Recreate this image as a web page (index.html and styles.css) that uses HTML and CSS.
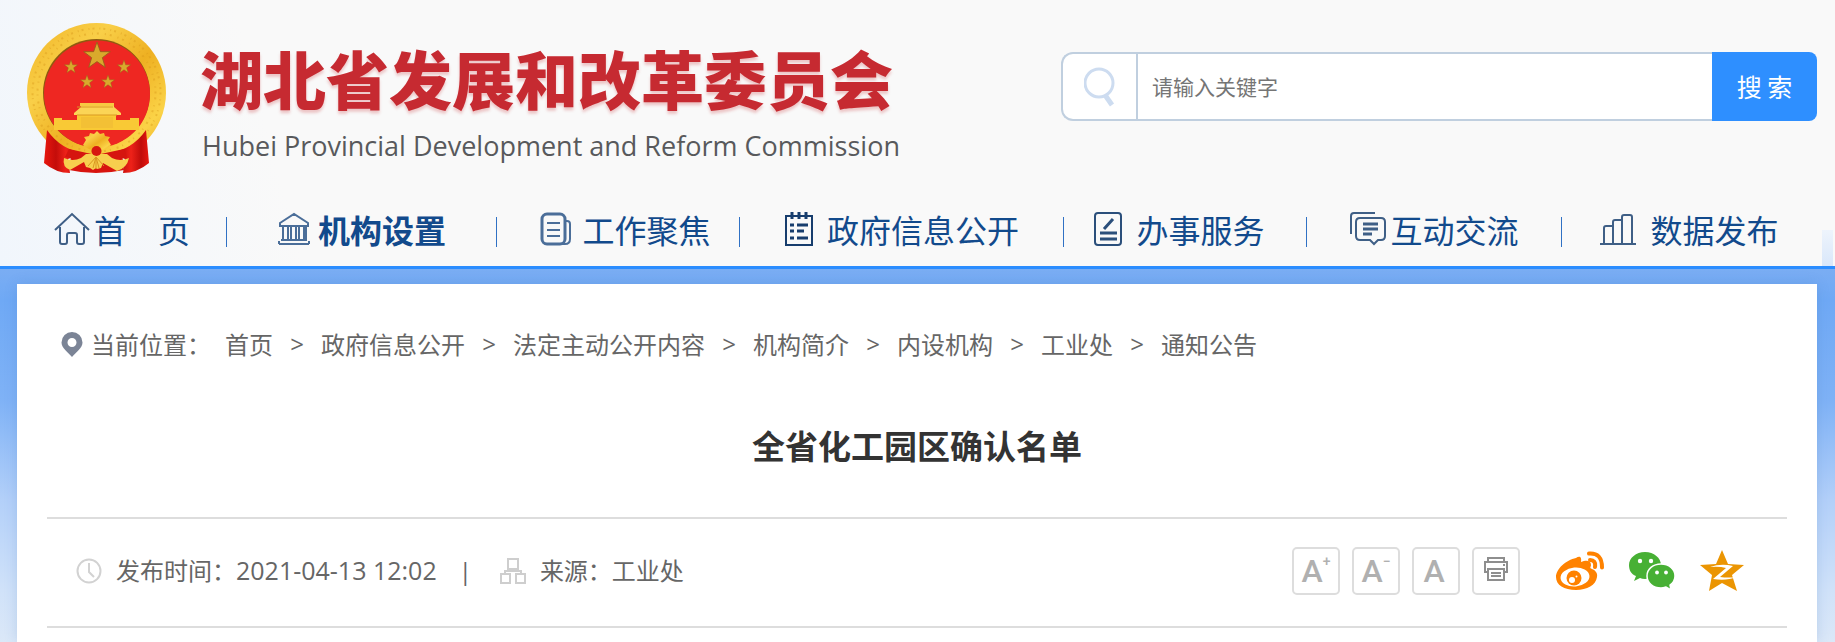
FILE: index.html
```html
<!DOCTYPE html>
<html lang="zh-CN">
<head>
  <meta charset="UTF-8">
  <meta name="viewport" content="width=device-width, initial-scale=1.0">
  <title>全省化工园区确认名单 - 湖北省发展和改革委员会</title>
  <link rel="stylesheet" href="styles.css">
</head>
<body>

  <!-- Header Section -->
  <header class="header">
    <div class="header-top">
      <a href="#" class="logo">
        <svg class="emblem" viewBox="0 0 140 150" aria-hidden="true">
          <defs>
            <linearGradient id="gold" x1="0" y1="0" x2="1" y2="1">
              <stop offset="0" stop-color="#f0b426"/>
              <stop offset=".3" stop-color="#f9cf48"/>
              <stop offset=".55" stop-color="#eeb022"/>
              <stop offset=".8" stop-color="#fbd347"/>
              <stop offset="1" stop-color="#e9a51c"/>
            </linearGradient>
            <linearGradient id="drape" x1="0" y1="0" x2="1" y2="0">
              <stop offset="0" stop-color="#e8170f"/>
              <stop offset=".3" stop-color="#c40d0a"/>
              <stop offset=".55" stop-color="#ee2219"/>
              <stop offset=".8" stop-color="#c00c0a"/>
              <stop offset="1" stop-color="#e8170f"/>
            </linearGradient>
            <path id="star" d="M0-10 2.4-3.1 9.5-3.1 3.8 1.2 5.9 8.1 0 4-5.9 8.1-3.8 1.2-9.5-3.1-2.4-3.1Z"/>
          </defs>
          <path fill="#d8140f" d="M46 120h48l3 27q-14 3-28 3t-27-3Z"/>
          <circle cx="69.500" cy="69.500" r="69.500" fill="url(#gold)"/>
          <circle cx="69.500" cy="69.500" r="64" fill="none" stroke="#d8951a" stroke-width="2" stroke-dasharray="2 5 1 3" opacity=".4"/>
          <circle cx="69.500" cy="69.500" r="59" fill="none" stroke="#d8951a" stroke-width="2" stroke-dasharray="1 4 2 6" opacity=".4"/>
          <ellipse cx="69.500" cy="70" rx="53.500" ry="54" fill="#8e5b10"/>
          <ellipse cx="70" cy="71" rx="53" ry="53.500" fill="#ee2722"/>
          <!-- stars -->
          <g fill="#d9a92c" stroke="#94601a" stroke-width=".6">
            <use href="#star" transform="translate(70 33) scale(1.4)"/>
            <use href="#star" transform="translate(44 44) scale(.7)"/>
            <use href="#star" transform="translate(97 44) scale(.7)"/>
            <use href="#star" transform="translate(60 59) scale(.7)"/>
            <use href="#star" transform="translate(81 59) scale(.7)"/>
          </g>
          <!-- gate -->
          <path fill="#f9c935" d="M27 95h8v2h15v-5h39v5h14v-2h9v12H27Z"/>
          <path fill="#fbd556" d="M53 80h34v4l7 6v2H47v-2l7-6Z"/>
          <path fill="#f7c942" d="M53 80h34v3H53Z"/>
          <path stroke="#d99a22" d="M50 92h40M50 84h36" fill="none"/>
          <path fill="#f3c035" d="M54 94h32v11H54Z"/>
          <!-- lower ring and drapes -->
          <path fill="url(#drape)" d="M20 107q14 20 37 23l-16 6 2 14q-14 0-26-10Z"/>
          <path fill="url(#drape)" d="M119 107q-14 20-37 23l16 6-2 14q14 0 26-10Z"/>
          <path fill="#d6150f" d="M42 126 69 132l28-6 3 8-31 7-31-7Z"/>
          <path fill="url(#gold)" d="m56 122 3-5-2-3 5-1 1-3 4 1 3-3 3 3 4-1 1 3 5 1-2 3 3 5q-7 6-14 6t-14-6Z"/>
          <path fill="#f7cf4e" d="M37 135q9 4 17 0l5-4h21l5 4q8 4 17 0-2 10-12 13l-14-8-2 5-4 1-1-1-3 2-3-2-4-1-2-5-14 8q-8-3-6-12Z"/>
          <path stroke="#d99620" fill="none" d="m69 134-8 9M69 134v12M69 134l8 9M69 134l-3 11M69 134l3 11"/>
          <circle cx="69.500" cy="128" r="5" fill="#d71710"/>
        </svg>
        <span class="logo-text">
          <span class="logo-cn">湖北省发展和改革委员会</span>
          <span class="logo-en">Hubei Provincial Development and Reform Commission</span>
        </span>
      </a>

      <form class="search" action="#">
        <label class="search-icon" for="keyword" aria-label="关键字">
          <svg width="32" height="40" viewBox="0 0 32 40" fill="none" stroke="#cddcf0">
            <circle cx="15" cy="16" r="14" stroke-width="3"/>
            <path d="m21 28 7 10" stroke-width="5"/>
          </svg>
        </label>
        <input class="search-input" id="keyword" type="text" placeholder="请输入关键字">
        <button class="search-button" type="submit">搜 索</button>
      </form>
    </div>

    <!-- Navigation Section -->
    <nav class="nav">
      <a href="#" class="nav-item nav-home">
        <svg width="36" height="34" viewBox="0 0 36 34" fill="none" stroke="#3f5f86" stroke-width="2">
          <path d="M1 18 18 2l17 16M6 15v15q0 2 2 2h3q2 0 2-2v-7q0-2 2-2h6q2 0 2 2v7q0 2 2 2h3q2 0 2-2V15"/>
        </svg>
        首&emsp;页
      </a>
      <a href="#" class="nav-item nav-org active">
        <svg width="32" height="34" viewBox="0 0 32 34" fill="none" stroke="#4b6e99" stroke-width="2">
          <path d="M2 11 16 2l14 9v3H2ZM5 14v14M10 14v14M13 14v14M18 14v14M21 14v14M26 14v14M28 14v14M3 28h26M1 32h30M1 29v3M31 29v3"/>
        </svg>
        机构设置
      </a>
      <a href="#" class="nav-item nav-focus">
        <svg width="32" height="34" viewBox="0 0 32 34" fill="none" stroke="#4b6e99" stroke-width="3">
          <rect x="2" y="2" width="23" height="30" rx="5"/>
          <path d="M25 9h2q3 0 3 3v15q0 5-5 5h-4M7 11h13M7 18h13M7 24h13" stroke-width="2"/>
        </svg>
        工作聚焦
      </a>
      <a href="#" class="nav-item nav-gov">
        <svg width="28" height="34" viewBox="0 0 28 34" fill="none" stroke="#173d6d" stroke-width="2">
          <path d="M1 4h26v29H1Z"/>
          <path d="M7 0v7M14 0v7M21 0v7M5 13h4M5 19h4M5 26h4M12 13h11M12 19h7M12 26h11" stroke-width="3"/>
        </svg>
        政府信息公开
      </a>
      <a href="#" class="nav-item nav-service">
        <svg width="28" height="34" viewBox="0 0 28 34" fill="none" stroke="#2b4f7b" stroke-width="2">
          <rect x="1" y="1" width="26" height="32" rx="3"/>
          <path d="m10 17 9-10M6 21h17M6 27h17" stroke-width="3"/>
        </svg>
        办事服务
      </a>
      <a href="#" class="nav-item nav-talk">
        <svg width="36" height="34" viewBox="0 0 36 34" fill="none" stroke="#3f5f86" stroke-width="2">
          <path d="M1 22V4q0-3 3-3h21M10 6h21q4 0 4 4v14q0 4-4 4h-3l-4 4-4-4H10q-4 0-4-4V10q0-4 4-4Z"/>
          <path d="M13 12h15M13 17h15M13 22h9" stroke-width="3"/>
        </svg>
        互动交流
      </a>
      <a href="#" class="nav-item nav-data">
        <svg width="36" height="34" viewBox="0 0 36 34" fill="none" stroke="#3f5f86" stroke-width="2">
          <path d="M0 32h36M4 32V16q0-2 2-2h7M13 32V10q0-2 2-2h7M22 32V5q0-2 2-2h6q2 0 2 2v27"/>
        </svg>
        数据发布
      </a>
    </nav>
  </header>

  <!-- Main Content Section -->
  <main class="content">
    <div class="breadcrumb">
      <svg class="pin" width="22" height="25" viewBox="0 0 22 25">
        <path fill="#7b8496" fill-rule="evenodd" d="M11 0a10.500 10.500 0 0 1 10.500 10.500C21.500 16 15 20 11 25 7 20 .5 16 .5 10.500A10.500 10.500 0 0 1 11 0Zm0 6a4.500 4.500 0 1 0 0 9 4.500 4.500 0 0 0 0-9Z"/>
      </svg>
      <span class="breadcrumb-label">当前位置：</span>
      <a href="#">首页</a><span class="arrow">&gt;</span>
      <a href="#">政府信息公开</a><span class="arrow">&gt;</span>
      <a href="#">法定主动公开内容</a><span class="arrow">&gt;</span>
      <a href="#">机构简介</a><span class="arrow">&gt;</span>
      <a href="#">内设机构</a><span class="arrow">&gt;</span>
      <a href="#">工业处</a><span class="arrow">&gt;</span>
      <a href="#">通知公告</a>
    </div>

    <h1 class="title">全省化工园区确认名单</h1>

    <div class="info">
      <div class="info-text">
        <svg width="26" height="26" viewBox="0 0 26 26" fill="none" stroke="#d2d2d2" stroke-width="2">
          <circle cx="13" cy="13" r="11.500"/>
          <path d="M13 5v9l5 5"/>
        </svg>
        <span>发布时间：<time class="date">2021-04-13 12:02</time></span>
        <span class="divider">|</span>
        <svg width="26" height="26" viewBox="0 0 26 26" fill="none" stroke="#cecece" stroke-width="2">
          <path d="M8 1h10v10H8ZM1 16h9v9H1ZM16 16h9v9h-9ZM13 11v2M5 16v-3h16v3"/>
        </svg>
        <span>来源：工业处</span>
      </div>
      <div class="tools">
        <button class="tool" type="button" aria-label="放大字体">A<sup>+</sup></button>
        <button class="tool" type="button" aria-label="缩小字体">A<sup>−</sup></button>
        <button class="tool tool-plain" type="button" aria-label="默认字体">A</button>
        <button class="tool tool-print" type="button" aria-label="打印">
          <svg width="24" height="24" viewBox="0 0 24 24" fill="none" stroke="#8e8e8e" stroke-width="2">
            <path d="M4 5V1h16v4M4 15H1V5h22v10h-3M4 12h16v11H4ZM7 16h10M7 19h10M19 8h2"/>
          </svg>
        </button>
      </div>
      <div class="share">
        <a href="#" aria-label="微博">
          <svg width="48" height="40" viewBox="0 0 48 40">
            <path fill="#ff8200" d="M20 7c3-2 6-2 5 4 5-2 10-2 10 3 0 2-2 3 1 4 3 1 6 4 5 8-1 8-10 13-21 13C8 39 0 34 0 26 0 18 10 9 20 7Z"/>
            <ellipse cx="19" cy="26" rx="14.500" ry="9.500" fill="#fff" transform="rotate(-5 19 26)"/>
            <circle cx="18" cy="27" r="7.500" fill="#ff8200"/>
            <circle cx="16" cy="29" r="3" fill="#fff"/>
            <circle cx="20.500" cy="25.500" r="1" fill="#fff"/>
            <path fill="none" stroke="#ff8200" stroke-linecap="round" stroke-width="4" d="M33 2.500q13-1 13 14M34 9q6 0 5 7"/>
          </svg>
        </a>
        <a href="#" aria-label="微信">
          <svg width="46" height="40" viewBox="0 0 46 40">
            <path fill="#47b034" d="M16 1c9 0 16 6 16 13S25 28 16 28q-3 0-5-1l-6 3 2-5C2 23 0 19 0 14 0 7 7 1 16 1Z"/>
            <path fill="#47b034" stroke="#fff" stroke-width="1.500" d="M32 13c8 0 14 5 14 12 0 4-2 7-5 9l1 5-5-3q-3 1-5 1c-8 0-14-5-14-12s6-12 14-12Z"/>
            <g fill="#fff"><circle cx="11" cy="10" r="2.200"/><circle cx="22" cy="10" r="2.200"/><circle cx="28" cy="21.500" r="1.900"/><circle cx="37" cy="21.500" r="1.900"/></g>
          </svg>
        </a>
        <a href="#" aria-label="QQ空间">
          <svg width="44" height="42" viewBox="0 0 44 42">
            <path fill="#eb9502" d="m22 0 6 14 16 1-12 10 5 16-15-8-13 8 3-16L0 15l16-1Z"/>
            <path fill="#fff" d="M10 17q11-4 23-1L20 27q9 1 16 0-9 4-23 2L26 18q-7-2-16-1Z"/>
          </svg>
        </a>
      </div>
    </div>
  </main>

</body>
</html>
```
FILE: styles.css
```css
/* Global Styles */
* {
  box-sizing: border-box;
}

body {
  margin: 0;
  min-height: 100vh;
  font-family: "Noto Sans CJK SC", sans-serif;
  color: #666;
  background: linear-gradient(#7aadf3 270px, #6fa9f5 300px, #7fb2f6 400px, #b3d0f9 500px, #d0e2f9 590px, #dbe8f8 642px);
}

a {
  color: inherit;
  text-decoration: none;
}

svg {
  display: block;
  flex: none;
}

/* Header */
.header {
  background:
    linear-gradient(#eef4fc, #d9e7fa) right 2px bottom / 11px 36px no-repeat,
    linear-gradient(75deg, #f1f6fc, #f9f9f9 16%);
  border-bottom: 3px solid #2b8dff;
}

.header-top {
  display: flex;
  justify-content: space-between;
  align-items: flex-start;
  height: 196px;
  padding: 23px 18px 0 27px;
}

.logo {
  display: flex;
  gap: 33px;
}

.emblem {
  width: 140px;
  height: 150px;
}

.logo-text {
  display: flex;
  flex-direction: column;
  padding-top: 14px;
}

.logo-cn {
  font-size: 63px;
  font-weight: 900;
  line-height: 80px;
  color: #c62a31;
  text-shadow: 0 3px 3px rgba(198, 42, 49, 0.25);
}

.logo-en {
  padding-left: 2px;
  font-family: "Open Sans", sans-serif;
  font-size: 27px;
  line-height: 58px;
  color: #58595c;
}

.search {
  display: flex;
  width: 756px;
  height: 69px;
  margin-top: 29px;
}

.search-icon {
  display: flex;
  align-items: center;
  justify-content: center;
  width: 75px;
  background: #fff;
  border: 2px solid #c0cfdf;
  border-right: 0;
  border-radius: 12px 0 0 12px;
}

.search-input {
  flex: 1;
  min-width: 0;
  padding: 0 0 2px 14px;
  font-family: inherit;
  font-size: 21px;
  border: 2px solid #c0cfdf;
  border-right: 0;
  border-radius: 0;
  outline: 0;
}

.search-input::placeholder {
  color: #757575;
}

.search-button {
  width: 105px;
  padding: 0 0 2px;
  font-family: inherit;
  font-size: 25px;
  color: #fff;
  background: #2e8fff;
  border: 0;
  border-radius: 0 8px 8px 0;
}

/* Navigation */
.nav {
  display: flex;
  height: 70px;
  margin: 0 18px 0 17px;
}

.nav-item {
  display: flex;
  flex: 255 1 0;
  align-items: center;
  justify-content: center;
  gap: 10px;
  height: 70px;
  padding-bottom: 4px;
  font-size: 32px;
  line-height: 66px;
  white-space: nowrap;
  color: #124a8c;
  background: linear-gradient(#3071c4, #3071c4) right 21px / 1px 30px no-repeat;
}

.nav-item:last-child {
  background: none;
}

.nav-item.active {
  font-weight: bold;
}

.nav-home {
  flex-grow: 210;
  gap: 4px;
}

.nav-org {
  flex-grow: 270;
  gap: 8px;
}

.nav-focus {
  flex-grow: 229;
  padding-left: 14px;
}

.nav-gov {
  flex-grow: 324;
  gap: 14px;
}

.nav-service {
  flex-grow: 231;
  gap: 14px;
  padding-right: 12px;
}

.nav-talk {
  gap: 4px;
}

.nav-data {
  gap: 14px;
}

/* Main Content Area */
.content {
  min-height: calc(100vh - 284px);
  margin: 15px 18px 0 17px;
  padding: 0 30px;
  background: #fff;
  box-shadow: 0 0 12px rgba(60, 110, 180, 0.2);
}

.breadcrumb {
  display: flex;
  align-items: center;
  padding: 42px 0 0 14px;
  font-size: 24px;
  line-height: 36px;
}

.breadcrumb-label {
  margin: 0 14px 0 8px;
}

.arrow {
  width: 48px;
  font-family: "Open Sans", sans-serif;
  font-size: 24px;
  text-align: center;
}

.title {
  margin: 59px 0 48px;
  font-size: 33px;
  line-height: 48px;
  text-align: center;
  color: #333;
}

.info {
  display: flex;
  align-items: center;
  height: 111px;
  padding: 0 43px 4px 29px;
  border-top: 2px solid #ddd;
  border-bottom: 2px solid #ddd;
}

.info-text {
  display: flex;
  align-items: center;
  gap: 14px;
  margin-right: auto;
  font-family: "Open Sans", "Noto Sans CJK SC", sans-serif;
  font-size: 24px;
  line-height: 36px;
}

.date {
  font-size: 25px;
}

.divider {
  margin: 0 14px 0 8px;
}

.tools {
  display: flex;
  gap: 12px;
}

.tool {
  display: flex;
  align-items: center;
  justify-content: center;
  width: 48px;
  height: 48px;
  padding: 0;
  font-family: Roboto, sans-serif;
  font-size: 32px;
  font-weight: 500;
  line-height: 44px;
  color: #b0b0b0;
  background: #fff;
  border: 2px solid #ddd;
  border-radius: 5px;
}

.tool sup {
  align-self: flex-start;
  font-size: 14px;
  line-height: 24px;
}

.tool-plain {
  padding-right: 4px;
}

.tool-print {
  padding-bottom: 4px;
}

.share {
  display: flex;
  align-items: center;
  gap: 25px;
  margin-left: 36px;
}
```
